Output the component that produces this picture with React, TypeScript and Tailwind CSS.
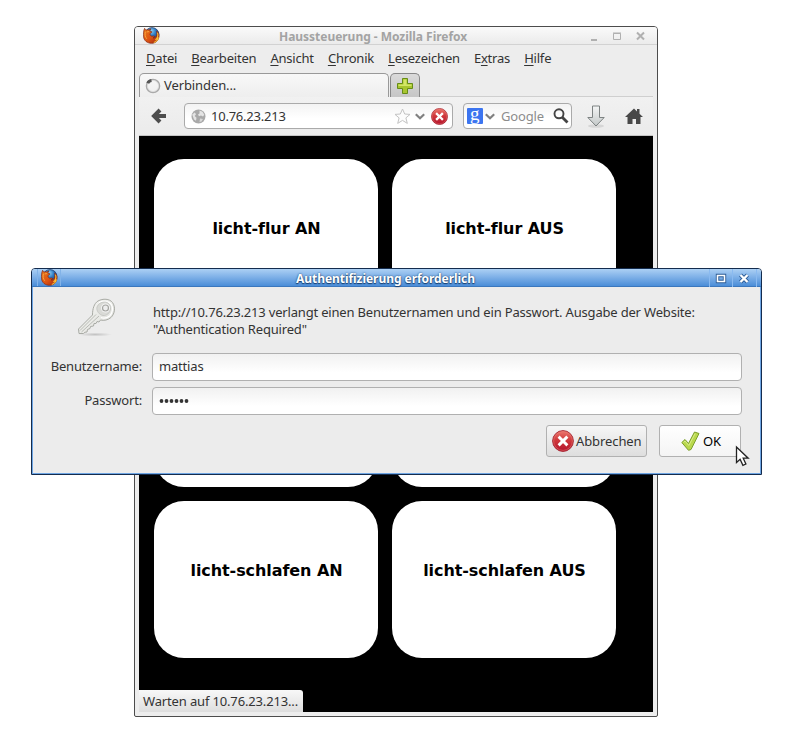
import React from "react";

const ui = "font-['Noto_Sans','Open_Sans',sans-serif]";

function Firefox() {
  return (
    <svg width="17" height="17" viewBox="0 0 18 18" className="block shrink-0">
      <defs>
        <radialGradient id="globe" cx=".45" cy=".25" r=".7">
          <stop offset="0" stopColor="#8fd0f4" />
          <stop offset=".45" stopColor="#2f7cc4" />
          <stop offset="1" stopColor="#143470" />
        </radialGradient>
        <linearGradient id="fox" x1="0" y1="0" x2="1" y2="1">
          <stop offset="0" stopColor="#ea7a1c" />
          <stop offset=".55" stopColor="#dc5212" />
          <stop offset="1" stopColor="#9c2410" />
        </linearGradient>
      </defs>
      <circle cx="9.5" cy="8" r="7.400" fill="url(#globe)" stroke="#1d3260" strokeWidth=".7" />
      <path d="M1.700 1.400C2 2.500 2.600 3 3.400 3.200c1-.5 2-.5 2.800-.1.700-.8 1.500-1 2.300-1-.8.6-1.200 1.300-1.300 2.200.7.5 1.700.5 2.300.8-.1.900-1.400 1.200-2 1.800-.3.900.2 2 1.200 2.600 1.300.6 2.300-.2 3.400.1.400.5-.4 1.500-1.500 2 2 .3 3.500-1 4-3 .3-1.600.2-3-.2-4.400 1.800 1.400 2.700 3.200 2.600 5.500-.3 4.100-3.600 7.600-7.800 7.600C4.500 17.300.7 14.300.5 9.800.4 7.200.5 3.700 1.700 1.400z" fill="url(#fox)" stroke="#7e2414" strokeWidth=".7" />
      <path d="M15.400 6c.8 2.700.2 5.200-1.600 7.200 1.500-.2 2.300-1 2.600-2.100-.5 2.600-2.400 4.400-5 5.200" fill="none" stroke="#f8c034" strokeWidth="1.100" />
      <path d="M2.600 5C1.800 8 2.300 10.500 4 12.500M4 5.200l2.500-.4" fill="none" stroke="#f7a640" strokeWidth="1" />
    </svg>
  );
}

function StopIcon({ size }: { size: number }) {
  return (
    <svg width={size} height={size} viewBox="0 0 22 22" className="block shrink-0">
      <defs>
        <linearGradient id="stop" x1="0" y1="0" x2="0" y2="1">
          <stop offset="0" stopColor="#ed7a70" />
          <stop offset=".45" stopColor="#d0393c" />
          <stop offset="1" stopColor="#b3122c" />
        </linearGradient>
      </defs>
      <circle cx="11" cy="11" r="10.400" fill="url(#stop)" stroke="#a3202c" strokeWidth=".9" />
      <circle cx="11" cy="11" r="9.400" fill="none" stroke="#ec8078" strokeOpacity=".6" strokeWidth=".8" />
      <path d="M7.700 7.700l6.600 6.600M14.300 7.700l-6.600 6.600" stroke="#fff" strokeWidth="3" strokeLinecap="square" />
    </svg>
  );
}

function KeyIcon() {
  return (
    <svg width="40" height="40" viewBox="0 0 40 40" className="block">
      <defs>
        <linearGradient id="key" x1="0" y1="0" x2="1" y2="1">
          <stop offset="0" stopColor="#f8f8f6" />
          <stop offset="1" stopColor="#dcddd8" />
        </linearGradient>
        <radialGradient id="keyshade">
          <stop offset="0" stopColor="#000" stopOpacity=".18" />
          <stop offset="1" stopColor="#000" stopOpacity="0" />
        </radialGradient>
      </defs>
      <ellipse cx="18" cy="36.500" rx="17" ry="2" fill="url(#keyshade)" />
      <path d="M21 3C26 .3 32.500.6 35.500 4.500c3.200 4.500 2.500 11-1.500 15-3 2.500-7 3.500-10.500 2.500L22 24l-2-.5-1 2-2 0-.5 2.500-3 .5-.5 2-2.500 1-.500 2.500-2 .2-1.500 1.300H2L1.500 31 15.500 17C15.500 11 17 5.500 21 3z" fill="url(#key)" stroke="#a9aba5" />
      <path d="M22 4.500c4.500-2 9.500-1.500 12 1.500 2.500 3.500 1.800 9-1.400 12-2.500 2-6 2.600-8.600 1.500" fill="none" stroke="#fff" strokeWidth="1.200" />
      <path d="M3 32.500L19 16.500M4.500 34L22 18" stroke="#b3b5b0" strokeWidth=".9" />
      <path d="M20 9c1-3 4-5 7.500-5s6.500 3 6 7-4 7-7.500 6.500S19 13 20 9z" fill="#d9dad6" stroke="#c2c3bf" strokeWidth=".8" />
      <circle cx="28.500" cy="10" r="4.500" fill="#f4f4f4" />
      <circle cx="28.500" cy="10" r="3" fill="#ededed" stroke="#a4a5a1" strokeWidth="1.200" />
    </svg>
  );
}

function Label({ text, hot }: { text: string; hot: number }) {
  return (
    <span>
      {text.slice(0, hot)}
      <span className="underline underline-offset-2">{text[hot]}</span>
      {text.slice(hot + 1)}
    </span>
  );
}

function Chevron() {
  return (
    <svg width="10" height="7" viewBox="0 0 10 7" className="block shrink-0">
      <path d="M.8 1.200l4.200 4 4.200-4" fill="none" stroke="#808080" strokeWidth="2.200" />
    </svg>
  );
}

function Card({ children }: { children: React.ReactNode }) {
  return (
    <div className="flex h-[157px] w-[224px] items-center justify-center rounded-[30px] bg-white pb-[18px] pl-px font-['DejaVu_Sans',sans-serif] text-[16px] font-bold tracking-[-0.08px] text-black">
      {children}
    </div>
  );
}

function Browser() {
  return (
    <div className="absolute left-[134px] top-[26px] flex h-[691px] w-[524px] flex-col rounded-t-[4px] rounded-b-[2px] border border-[#4c4c4c] bg-[#ededed] text-[13px] text-[#333]">
      <div className="flex h-[18px] shrink-0 items-center rounded-t-[3px] border-b border-[#d2d2d2] bg-linear-to-b from-[#fafafa] to-[#ebebeb]">
        <div className="ml-[8px] w-[20px]"><Firefox /></div>
        <div className="ml-[116px] mt-[2px] w-[189px] whitespace-nowrap text-[12px] font-bold tracking-[-0.03px] text-[#a3a3a3]">Haussteuerung - Mozilla Firefox</div>
        <svg width="60" height="12" viewBox="0 0 60 12" className="ml-[120px] block" fill="none" stroke="#b0b0b0">
          <path d="M3 10h6" strokeWidth="2" />
          <path d="M25.500 3.500h7v6h-7zM25 3h8" />
          <path d="M49 2.500l7 7M56 2.500l-7 7" strokeWidth="2" />
        </svg>
      </div>
      <div className="flex h-[28px] shrink-0 items-center gap-[14px] pb-[2px] pl-[11px] leading-[18px] tracking-[-0.2px]">
        <Label text="Datei" hot={0} />
        <Label text="Bearbeiten" hot={0} />
        <Label text="Ansicht" hot={0} />
        <Label text="Chronik" hot={0} />
        <Label text="Lesezeichen" hot={0} />
        <Label text="Extras" hot={1} />
        <Label text="Hilfe" hot={0} />
      </div>
      <div className="mx-[4px] flex h-[24px] shrink-0">
        <div className="flex w-[250px] items-center gap-[3px] rounded-t-[5px] border border-b-0 border-[#999] bg-linear-to-b from-[#f8f8f8] to-[#eeeeee] pl-[5px] tracking-[-0.1px]">
          <svg width="16" height="16" viewBox="0 0 16 16" fill="none">
            <circle cx="8" cy="8" r="6.500" stroke="#aaa" strokeWidth="1.600" />
            <circle cx="8" cy="8" r="5.600" stroke="#ddd" strokeWidth=".8" />
            <path d="M2.800 5.200Q3.600 3 6.500 2.600" stroke="#555" strokeWidth="3" />
          </svg>
          Verbinden...
        </div>
        <div className="ml-px flex w-[30px] items-center justify-center rounded-t-[5px] border border-b-0 border-[#888] bg-linear-to-b from-[#dadada] to-[#c6c6c6]">
          <svg width="18" height="18" viewBox="0 0 18 18">
            <path d="M6.500 1.500h5v5h5v5h-5v5h-5v-5h-5v-5h5z" fill="#a8c62f" stroke="#668c17" />
            <path d="M7.500 2.500h3v5h5v1.500h-13V7.500h5z" fill="#d3e768" />
          </svg>
        </div>
        <div className="flex-1 border-b border-[#cfcfcf]" />
      </div>
      <div className="mx-[4px] flex h-[39px] shrink-0 items-center border-b border-[#c4c4c4] bg-linear-to-b from-[#f1f1f1] to-[#ebebeb]">
        <svg width="16" height="18" viewBox="0 0 16 18" className="ml-[12px] block">
          <path d="M9 3L3 9l6 6M3 9h12" fill="none" stroke="#4d4d4d" strokeWidth="4" />
        </svg>
        <div className="ml-[17px] flex h-[26px] w-[269px] items-center rounded-[4px] border border-[#aaa] bg-linear-to-b from-[#f3f3f3] to-white to-60% pl-[6px]">
          <svg width="15" height="15" viewBox="0 0 15 15" className="block shrink-0">
            <circle cx="7.500" cy="7.500" r="7" fill="#a9a9a9" />
            <path d="M8.500 1.500l3 1.200 1.800 3-1.300 1.800-2-1-2 .8-1-1.800 1.500-1zM1.200 5.500l2.600-2 1.200 1.700-1.300 1.800 1.800 1.800-.5 3L3 10.500z" fill="#e4e4e4" />
            <path d="M9 9.500l3 .5-1.500 2.600-2 .4z" fill="#d8d8d8" />
          </svg>
          <span className="ml-[5px] mt-[2px] w-[183px] tracking-[-0.23px]">10.76.23.213</span>
          <svg width="17" height="17" viewBox="0 0 17 17" className="block shrink-0">
            <path d="M8.500 1l2.200 5 5.300.4-4.100 3.500 1.400 5.500-4.800-3-4.800 3 1.400-5.500L1 6.400 6.300 6z" fill="#fcfcfc" stroke="#c3c3c3" />
          </svg>
          <span className="mx-[4px]"><Chevron /></span>
          <span className="ml-[2px]"><StopIcon size={17} /></span>
        </div>
        <div className="ml-[10px] flex h-[26px] w-[109px] items-center rounded-[4px] border border-[#aaa] bg-linear-to-b from-[#f3f3f3] to-white to-60% pl-[3px]">
          <div className="relative h-[16px] w-[16px] shrink-0 rounded-[1px] bg-[#3c75f0] font-['Liberation_Serif',serif] text-[19px] text-white">
            <span className="absolute left-[3px] top-[-5px] leading-[22px]">g</span>
          </div>
          <span className="ml-[2px]"><Chevron /></span>
          <span className="ml-[6px] mt-[2px] w-[52px] tracking-[-0.18px] text-[#8c8c8c]">Google</span>
          <svg width="16" height="16" viewBox="0 0 16 16" fill="none" stroke="#444" className="block shrink-0">
            <circle cx="6" cy="5.800" r="4.500" strokeWidth="1.900" />
            <path d="M9 9l5.500 5.500" strokeWidth="2.800" />
          </svg>
        </div>
        <svg width="20" height="23" viewBox="0 0 20 23" className="ml-[14px] block">
          <defs>
            <linearGradient id="down" x1="0" y1="0" x2="0" y2="1">
              <stop offset="0" stopColor="#f4f5f5" />
              <stop offset="1" stopColor="#c3c8c8" />
            </linearGradient>
          </defs>
          <ellipse cx="10" cy="21" rx="8" ry="1.800" fill="#d6d6d6" />
          <path d="M6.500 1h7v11.500h4.700L10 21l-8.200-8.500h4.700z" fill="url(#down)" stroke="#7d8282" />
        </svg>
        <svg width="18" height="18" viewBox="0 0 18 18" className="ml-[19px] block" fill="#484848">
          <path d="M9 1.500l3 2.900V2h2.500v4.700L18 10h-2.500v7H11v-5H7.500v5h-5v-7H0z" />
        </svg>
      </div>
      <div className="relative mx-[4px] h-[576px] bg-black pl-[15px] pt-[23px]">
        <div className="grid grid-cols-[224px_224px] gap-[14px]">
          <Card>licht-flur AN</Card>
          <Card>licht-flur AUS</Card>
          <Card>{null}</Card>
          <Card>{null}</Card>
          <Card>licht-schlafen AN</Card>
          <Card>licht-schlafen AUS</Card>
        </div>
        <div className="absolute bottom-0 left-0 flex h-[22px] w-[164px] items-center whitespace-nowrap rounded-tr-[3px] bg-linear-to-b from-[#f8f8f8] to-[#dedede] pl-[4px] pt-px tracking-[-0.15px]">Warten auf 10.76.23.213...</div>
      </div>
    </div>
  );
}

const field = "flex h-[28px] w-[590px] items-center rounded-[4px] border border-[#b0b0b0] bg-linear-to-b from-[#f1f1f1] to-white to-70% pl-[6px]";
const button = "flex h-[32px] items-center rounded-[3px] border border-[#b1b1b1] bg-linear-to-b";

function Dialog() {
  return (
    <div className="absolute left-[31px] top-[268px] flex h-[207px] w-[731px] flex-col rounded-t-[4px] border border-[#142c4e] bg-[#ececec] text-[13px] tracking-[-0.18px] text-[#333]">
      <div className="flex h-[18px] shrink-0 items-center rounded-t-[3px] border-b border-[#3b77bd] bg-linear-to-b from-[#acd0f4] to-[#4a8dd8]">
        <div className="ml-[5px] flex h-full w-[24px] items-center justify-center border-x border-[#82b3e8]"><Firefox /></div>
        <div className="ml-[235px] mt-[2px] w-[180px] whitespace-nowrap text-[12px] font-bold tracking-[-0.05px] text-white [text-shadow:0_0_2px_#173f70,0_1px_1px_#173f70]">Authentifizierung erforderlich</div>
        <svg width="51" height="18" viewBox="0 0 51 18" className="ml-[233px] block" fill="none">
          <path d="M.5 0v18M23.500 0v18M47.500 0v18" stroke="#8abaf0" />
          <path d="M8.500 6.500h7v6h-7z" stroke="#2c5c96" strokeWidth="3.400" />
          <path d="M8.500 6.500h7v6h-7z" stroke="#fff" strokeWidth="1.600" />
          <path d="M31.500 6l7 7M38.500 6l-7 7" stroke="#2c5c96" strokeWidth="4" />
          <path d="M31.500 6l7 7M38.500 6l-7 7" stroke="#fff" strokeWidth="2.400" />
        </svg>
      </div>
      <div className="flex flex-1 flex-col border-x border-b border-[#6ea5e3]">
        <div className="flex h-[66px] shrink-0">
          <div className="ml-[44px] mt-[11px] w-[76px]"><KeyIcon /></div>
          <div className="mt-[17px] whitespace-nowrap leading-[17px]">
            http://10.76.23.213 verlangt einen Benutzernamen und ein Passwort. Ausgabe der Website:<br />"Authentication Required"
          </div>
        </div>
        <div className="flex items-center gap-[10px]">
          <div className="w-[109px] text-right">Benutzername:</div>
          <div className={field}>mattias</div>
        </div>
        <div className="mt-[6px] flex items-center gap-[10px]">
          <div className="w-[109px] text-right">Passwort:</div>
          <div className={field}>
            <svg width="32" height="6" viewBox="0 0 32 6" fill="#333">
              {[2.500, 7.500, 12.500, 17.500, 22.500, 27.500].map((x) => <circle key={x} cx={x} cy="3" r="1.900" />)}
            </svg>
          </div>
        </div>
        <div className="ml-[513px] mt-[10px] flex gap-[12px]">
          <div className={button + " w-[101px] gap-[2px] from-[#f6f6f6] to-[#dedede] pl-[5px]"}>
            <StopIcon size={22} /><span className="mt-px tracking-[-0.1px]">Abbrechen</span>
          </div>
          <div className={button + " w-[82px] from-white to-[#f4f4f4] pl-[21px] text-black"}>
            <svg width="19" height="20" viewBox="0 0 19 20" className="mr-[3px] block">
              <path d="M.8 11.500L4 8.500l3.500 4L13.500 1l4.500 1.500-8 16-2.500.8z" fill="#b9d84c" stroke="#7b9e2b" />
              <path d="M2.500 11.500L4 10l3.800 4.500L14.200 2.500" fill="none" stroke="#d9ec8a" />
            </svg>
            <span className="mt-px">OK</span>
          </div>
        </div>
      </div>
    </div>
  );
}

export default function App() {
  return (
    <div className={"relative h-[734px] w-[785px] overflow-hidden bg-white " + ui}>
      <Browser />
      <Dialog />
      <svg width="15" height="22" viewBox="0 0 15 22" className="absolute left-[735px] top-[445px]">
        <path d="M1.500 2v15.500l3.600-3.200 2.800 6 3-1.300-2.700-5.800h5z" fill="#fff" stroke="#222" strokeWidth="1.300" />
      </svg>
    </div>
  );
}
